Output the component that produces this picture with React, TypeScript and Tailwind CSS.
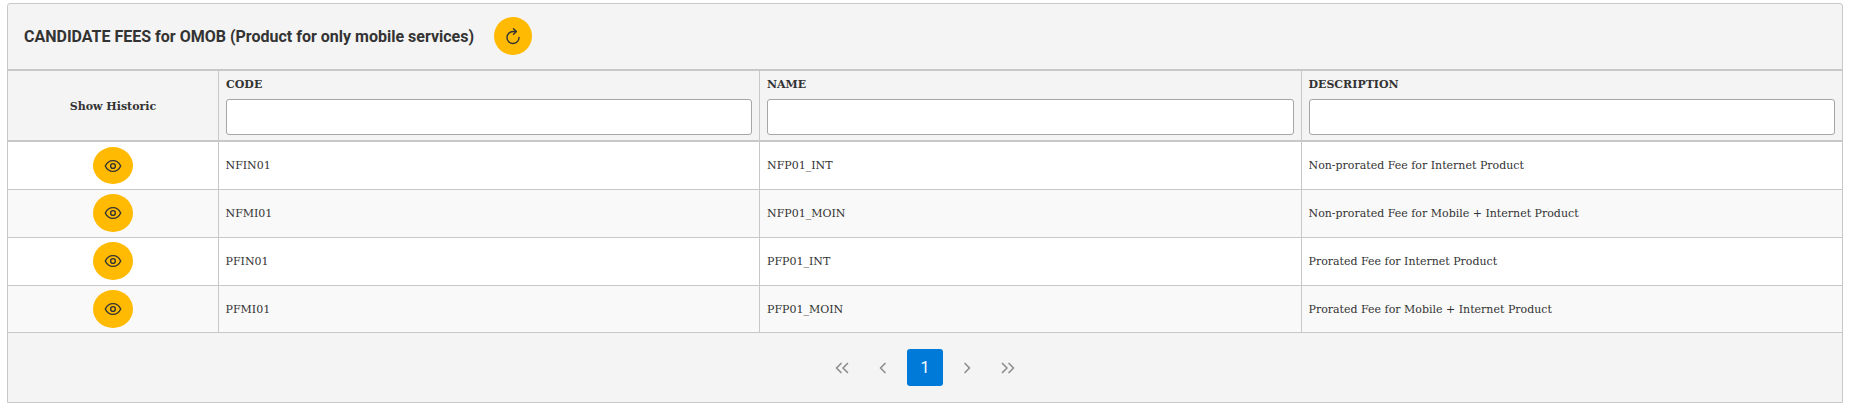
import React from "react";

type Fee = { code: string; name: string; description: string };

const fees: (Fee & { row: string; cell: string; button: string })[] = [
  { code: "NFIN01", name: "NFP01_INT", description: "Non-prorated Fee for Internet Product", row: "h-[48px] bg-white", cell: "", button: "h-[37px]" },
  { code: "NFMI01", name: "NFP01_MOIN", description: "Non-prorated Fee for Mobile + Internet Product", row: "h-[48px] bg-[#f9f9f9]", cell: "pb-px", button: "h-[38px]" },
  { code: "PFIN01", name: "PFP01_INT", description: "Prorated Fee for Internet Product", row: "h-[48px] bg-white", cell: "pb-px", button: "h-[38px]" },
  { code: "PFMI01", name: "PFP01_MOIN", description: "Prorated Fee for Mobile + Internet Product", row: "h-[47px] bg-[#f9f9f9]", cell: "", button: "h-[38px]" },
];

const grid = "grid grid-cols-[211px_541px_542px_540px]";

function EyeIcon() {
  return (
    <svg width="18" height="16" viewBox="0 0 18 16" fill="none" stroke="#333" strokeWidth="1.400">
      <path d="M1.300 8C2.800 4.800 5.400 2.600 9 2.600S15.200 4.800 16.700 8C15.200 11.200 12.600 13.400 9 13.400S2.800 11.200 1.300 8Z" strokeLinejoin="round" />
      <circle cx="9" cy="8" r="2.400" />
    </svg>
  );
}

function RefreshIcon() {
  return (
    <svg width="16" height="18" viewBox="0 0 16 18" fill="none" stroke="#333" strokeWidth="1.4" strokeLinecap="round" strokeLinejoin="round">
      <path d="M11.300 4.500H8A6 6 0 1 0 14 10.500" />
      <path d="M8.500 1.700L11.300 4.500L8.500 7.300" />
    </svg>
  );
}

function Chevron({ double = false, right = false }: { double?: boolean; right?: boolean }) {
  return (
    <svg
      width={double ? 14 : 8}
      height="12"
      viewBox={double ? "0 0 14 12" : "0 0 8 12"}
      fill="none"
      stroke="#8f8f8f"
      strokeWidth="1.700"
      strokeLinecap="round"
      strokeLinejoin="round"
      className={right ? "-scale-x-100" : ""}
    >
      <path d="M6 1.500L1.500 6L6 10.500" />
      {double && <path d="M12.500 1.500L8 6L12.500 10.500" />}
    </svg>
  );
}

function FilterHeader({ label, last = false }: { label: string; last?: boolean }) {
  return (
    <div className={last ? "px-[7px] pt-[6px]" : "border-r border-[#c8c8c8] px-[7px] pt-[6px]"}>
      <div className={last ? "-ml-[0.5px] h-[22px] leading-[15px] font-bold" : "h-[22px] leading-[15px] font-bold"}>{label}</div>
      <input aria-label={label} className="block h-[36px] w-full rounded-[3px] border border-[#a6a6a6] bg-white px-2 outline-none" />
    </div>
  );
}

export default function App() {
  return (
    <div className="h-[405px] bg-white pt-[3px] pl-[7px] font-['DejaVu_Serif',serif] text-[11px] text-[#333333]">
      <div className="h-[400px] w-[1836px] overflow-hidden rounded-t-[3px] border border-[#c8c8c8] bg-[#f4f4f4]">
        <div className="flex h-[65px] items-center gap-[20px] pl-[16px]">
          <h1 className="font-['Roboto',sans-serif] text-[16px] font-bold whitespace-nowrap">
            CANDIDATE FEES for OMOB (Product for only mobile services)
          </h1>
          <button aria-label="Refresh" className="mb-px flex size-[38px] items-center justify-center rounded-full bg-[#ffba01]">
            <RefreshIcon />
          </button>
        </div>

        <div className={`${grid} h-[73px] border-y-2 border-[#c8c8c8]`}>
          <div className="flex items-center justify-center border-r border-[#c8c8c8] pt-[3px] font-bold">Show Historic</div>
          <FilterHeader label="CODE" />
          <FilterHeader label="NAME" />
          <FilterHeader label="DESCRIPTION" last />
        </div>

        {fees.map((fee) => (
          <div key={fee.code} className={`${grid} ${fee.row} border-b border-[#c8c8c8]`}>
            <div className={`flex items-center justify-center border-r border-[#c8c8c8] ${fee.cell}`}>
              <button aria-label="Show historic" className={`flex w-[40px] items-center justify-center rounded-[50%] bg-[#ffba01] ${fee.button}`}>
                <EyeIcon />
              </button>
            </div>
            <div className="flex items-center border-r border-[#c8c8c8] pt-[1.5px] pl-[6.5px]">{fee.code}</div>
            <div className="flex items-center border-r border-[#c8c8c8] pt-[1.5px] pl-[7px]">{fee.name}</div>
            <div className="flex items-center pt-[1.5px] pl-[6.5px]">{fee.description}</div>
          </div>
        ))}

        <div className="grid h-[69px] grid-cols-[34px_48px_36px_48px_34px] content-center items-center justify-center pb-px">
          <button aria-label="First page" className="flex pt-px pl-[10px]"><Chevron double /></button>
          <button aria-label="Previous page" className="flex justify-center pt-px"><Chevron /></button>
          <button className="h-[37px] w-[36px] rounded-[3px] bg-[#007ad9] pt-[2px] font-['Roboto',sans-serif] text-[16px] text-white">1</button>
          <button aria-label="Next page" className="flex justify-center pt-px pr-px"><Chevron right /></button>
          <button aria-label="Last page" className="flex justify-end pt-px pr-[10px]"><Chevron double right /></button>
        </div>
      </div>
    </div>
  );
}
